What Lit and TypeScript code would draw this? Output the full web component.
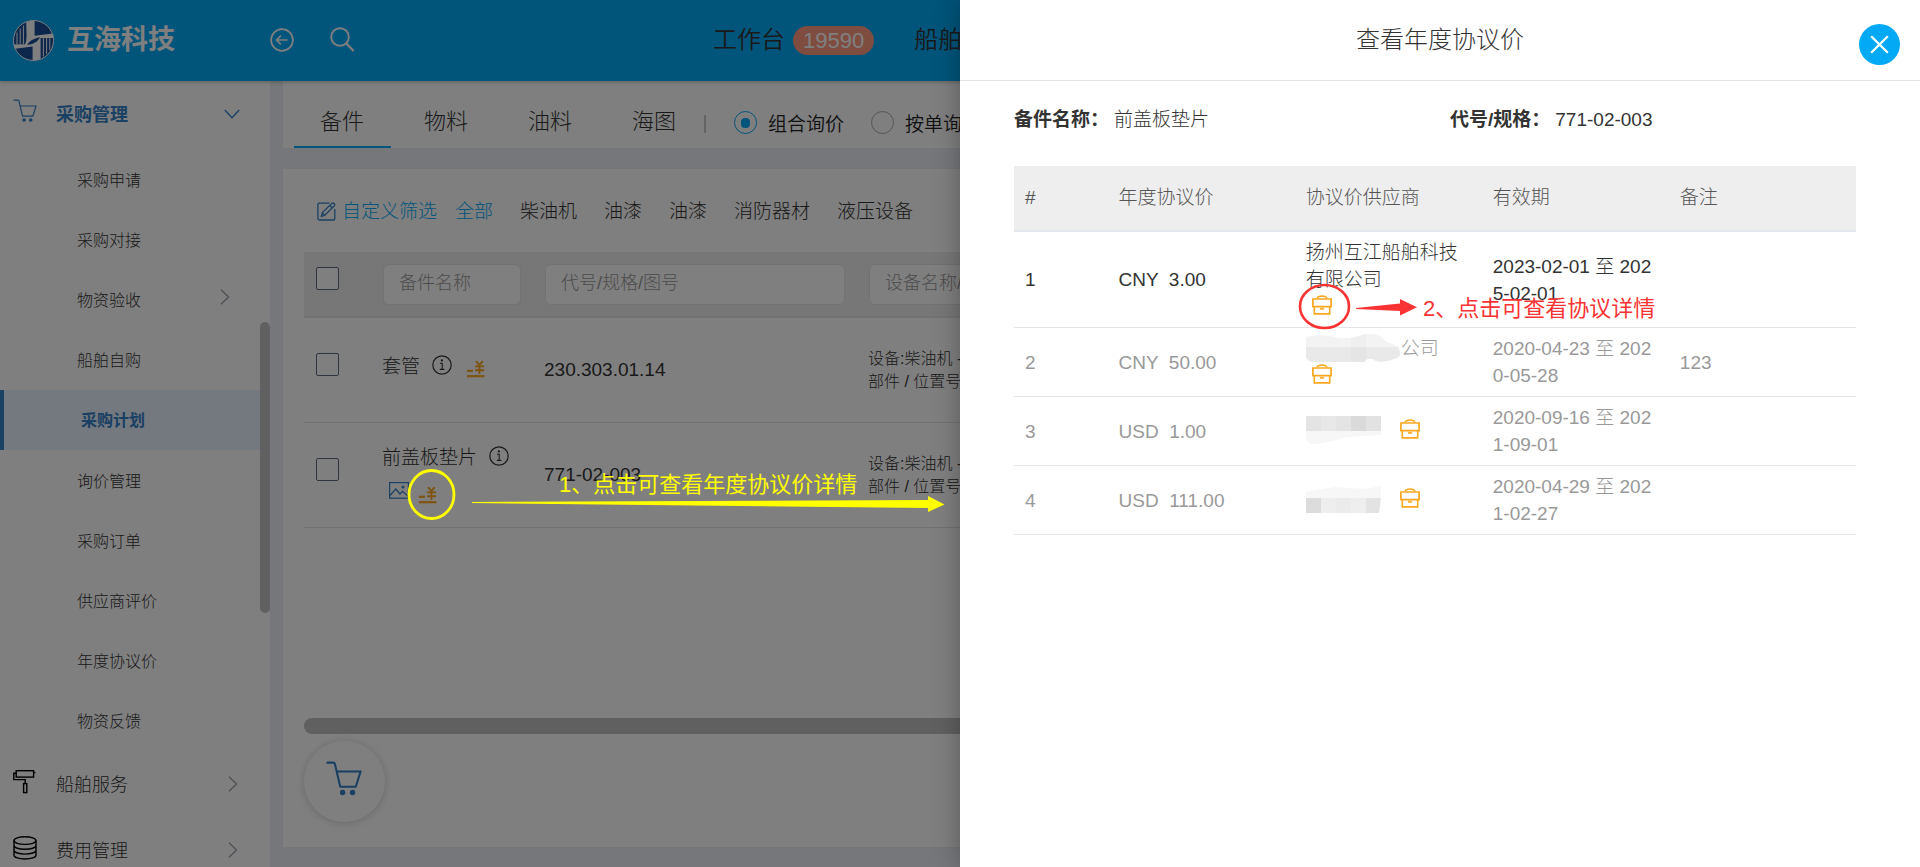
import { LitElement, html, svg, css, nothing } from "lit";
import { customElement, state } from "lit/decorators.js";
import { classMap } from "lit/directives/class-map.js";

const chevronRight = html`<svg class="chev" width="10" height="16" viewBox="0 0 10 16" aria-hidden="true">
  <path d="M1 .8 8.6 8 1 15.2" fill="none" stroke="currentColor" stroke-width="1.3" />
</svg>`;

const chevronDown = html`<svg class="chev" width="16" height="10" viewBox="0 0 16 10" aria-hidden="true">
  <path d="M.8 1 8 8.8 15.2 1" fill="none" stroke="currentColor" stroke-width="1.4" />
</svg>`;

const cartShapes = svg`
  <path d="M1 1.2h4.300q.9 0 1.100.8L10.300 18.600h11.200L25 7.600H7.800" fill="none" stroke="currentColor" stroke-width="var(--cart-stroke, 1.3)" stroke-linejoin="round" stroke-linecap="round" />
  <circle cx="12" cy="22.8" r="1.95" fill="currentColor" />
  <circle cx="19.2" cy="22.8" r="1.95" fill="currentColor" />`;

const menuIcons: Record<string, unknown> = {
  cart: html`<svg width="24" height="24" viewBox="0 0 26 26" aria-hidden="true">${cartShapes}</svg>`,
  roller: html`<svg width="24" height="26" viewBox="0 0 24 26" fill="none" stroke="currentColor" stroke-width="1.4" aria-hidden="true">
    <rect x="3.2" y="1.7" width="17.4" height="6.4" />
    <path d="M20.6 3.6h1.8M3.2 4.2H.8v6.4h11.4v4" />
    <rect x="10.6" y="14.6" width="3.2" height="9" />
  </svg>`,
  database: html`<svg width="24" height="24" viewBox="0 0 24 24" fill="none" stroke="currentColor" stroke-width="1.4" aria-hidden="true">
    <ellipse cx="12" cy="4.6" rx="11" ry="3.8" />
    <path d="M1 4.6v14.6c0 2.2 5 3.8 11 3.8s11-1.6 11-3.8V4.6M1 9.5c0 2.2 5 3.8 11 3.8s11-1.6 11-3.8M1 14.3c0 2.2 5 3.8 11 3.8s11-1.6 11-3.8" />
  </svg>`,
};

const yenIcon = html`<svg width="18" height="18" viewBox="0 0 18 18" fill="none" stroke="currentColor" aria-hidden="true">
  <path d="M0 10.8h6" stroke-width="2.2" />
  <path d="M9 1.2 12.4 5 15.8 1.2M12.4 5v9M8 6.4h9M8 10.2h9" stroke-width="1.9" />
  <path d="M0 16.2h17.4" stroke-width="2.2" />
</svg>`;

const infoIcon = html`<svg width="20" height="20" viewBox="0 0 20 20" fill="none" stroke="currentColor" aria-hidden="true">
  <circle cx="10" cy="10" r="9.2" stroke-width="1.2" />
  <path d="M8 8.2h2.2v6M7.8 14.4h4.6" stroke-width="1.1" />
  <circle cx="9.9" cy="5.4" r="1.1" fill="currentColor" stroke="none" />
</svg>`;

const pictureIcon = html`<svg width="20" height="17" viewBox="0 0 20 17" fill="none" stroke="currentColor" aria-hidden="true">
  <rect x=".6" y=".6" width="18.8" height="15.6" stroke-width="1.2" />
  <path d="M1 13.5 6.8 7l4.2 5 2.6-2.6 5.6 5" stroke-width="1.2" />
  <circle cx="14" cy="5" r="1.5" fill="currentColor" stroke="none" />
</svg>`;

const caseIcon = html`<svg width="20" height="20" viewBox="0 0 20 20" fill="none" stroke="currentColor" aria-hidden="true">
  <path d="M5 3.4C5.6 1.8 7.4 1 10 1s4.400.8 5 2.4" stroke-width="1.5" />
  <path d="M.9 4h18.200v7.600H.9z" stroke-width="1.7" />
  <path d="M2.300 11.600v7.300h15.400v-7.300" stroke-width="1.6" />
  <path d="M8.200 13.200h3.600v1.200H8.200z" fill="currentColor" stroke-width=".6" />
</svg>`;

const SUB_MENU = ["采购申请", "采购对接", "物资验收", "船舶自购", "采购计划", "询价管理", "采购订单", "供应商评价", "年度协议价", "物资反馈"];
const TABS = ["备件", "物料", "油料", "海图"];
const FILTERS = ["全部", "柴油机", "油漆", "油漆", "消防器材", "液压设备"];

@customElement("side-menu")
class SideMenu extends LitElement {
  @state() private active = "采购计划";

  static styles = css`
    :host { display: block; position: relative; overflow: hidden; background: #fff; font-weight: 300; color: #333; }
    a { color: inherit; text-decoration: none; display: flex; align-items: center; }
    .group span { padding-bottom: 2px; }
    .group { height: 66px; padding: 0 32px 0 13px; font-size: 18px; box-sizing: border-box; }
    .group svg:first-child { flex: none; margin: 0 19px 4px 0; color: #000; }
    .group .chev { margin-left: auto; color: #9a9fab; }
    .group.open { font-weight: 700; color: #3480c6; padding-right: 30px; }
    .group.open svg, .group.open svg:first-child { color: #3480c6; }
    .group.open svg:first-child { margin-bottom: 6px; }
    ul { list-style: none; margin: 0; padding: 2px 0 0; height: 604px; box-sizing: border-box; display: flex; flex-direction: column; justify-content: space-between; }
    .item { height: 60px; padding: 0 40px 1px 77px; font-size: 16px; box-sizing: border-box; }
    .item .chev { margin: 0 0 4px auto; color: #9a9fab; }
    .item.on { background: #e9f1ff; border-left: 4px solid #3480c6; color: #3480c6; font-weight: 700; }
    .bar { position: absolute; right: 0; top: 241px; width: 10px; height: 291px; border-radius: 5px; background: #c1c1c1; }
  `;

  render() {
    return html`
      <nav>
        <a class="group open" href="#purchase">${menuIcons.cart}<span>采购管理</span>${chevronDown}</a>
        <ul>
          ${SUB_MENU.map((name) => html`<li>
            <a class=${classMap({ item: true, on: name === this.active })} href="#sub" @click=${() => (this.active = name)}>
              <span>${name}</span>${name === "物资验收" ? chevronRight : nothing}
            </a>
          </li>`)}
        </ul>
        <a class="group" href="#service">${menuIcons.roller}<span>船舶服务</span>${chevronRight}</a>
        <a class="group" href="#cost">${menuIcons.database}<span>费用管理</span>${chevronRight}</a>
      </nav>
      <div class="bar"></div>
    `;
  }
}

@customElement("top-bar")
class TopBar extends LitElement {
  static styles = css`
    :host { display: flex; align-items: center; height: 81px; background: #03a9f4; position: relative; z-index: 1; box-shadow: 0 1px 4px rgba(0, 0, 0, 0.25); }
    .brand { display: flex; align-items: center; gap: 13px; width: 270px; padding-left: 13px; box-sizing: border-box; color: #fff; font-size: 27px; line-height: 36px; font-weight: 700; }
    .brand span { padding-bottom: 2px; }
    .tools { display: flex; align-items: center; gap: 36px; padding-bottom: 2px; }
    button { border: 0; padding: 0; background: none; color: #fff; display: block; }
    svg { display: block; }
    nav { display: flex; gap: 40px; margin-left: 358px; font-size: 24px; line-height: 36px; font-weight: 350; white-space: nowrap; }
    a { color: #333; text-decoration: none; display: flex; align-items: center; gap: 8px; padding-bottom: 2px; }
    .badge { height: 29px; line-height: 29px; padding: 0 10px; margin-top: 2px; border-radius: 15px; background: #ff9880; color: #fff; font-size: 22px; }
  `;

  render() {
    return html`
      <div class="brand">
        <svg width="41" height="41" viewBox="0 0 41 41" aria-hidden="true">
          <circle cx="20.5" cy="20.5" r="20" fill="#1b4c98" stroke="#fff" />
          <path d="M13.200 2.600Q17 .8 21.600.6V15.800L40 13.600Q41 16.500 40.500 18H27.600V38.800Q24 40.500 19.600 40.400V26.400L2 28.800Q.8 27 .6 24.600L12 24.200Q13.600 21 13.600 16z" fill="#fff" />
          <path d="M14 24.800c2.500-4 6.500-6.400 13-7.600-2 4.200-5.600 6.800-13 7.600z" fill="#1b4c98" />
          <path d="M4 12.500v12M7.200 8.500V24.500M10.400 5.500V24" stroke="#fff" stroke-width="1" />
          <path d="M30.400 18V36.500M33.600 18v16M36.800 18V30" stroke="#fff" stroke-width="1" />
        </svg>
        <span>互海科技</span>
      </div>
      <div class="tools">
        <button aria-label="返回">
          <svg width="24" height="24" viewBox="0 0 24 24" fill="none" stroke="currentColor" stroke-width="1.7">
            <circle cx="12" cy="12" r="10.9" />
            <path d="M17.500 12H7M11 7.500 6.500 12l4.500 4.500" />
          </svg>
        </button>
        <button aria-label="搜索">
          <svg width="25" height="26" viewBox="0 0 25 26" fill="none" stroke="currentColor" stroke-width="1.9">
            <circle cx="10" cy="10" r="8.8" />
            <path d="M16.200 16.200 23.600 24" stroke-width="2.2" />
          </svg>
        </button>
      </div>
      <nav>
        <a href="#desk"><span>工作台</span><span class="badge">19590</span></a>
        <a href="#ship">船舶</a>
      </nav>
    `;
  }
}

@customElement("parts-page")
class PartsPage extends LitElement {
  @state() private tab = "备件";

  static styles = css`
    :host { display: flex; flex-direction: column; gap: 21px; padding: 0 13px 20px; min-width: 0; box-sizing: border-box; background: #ebeff4; font-weight: 300; color: #333; }
    svg { display: block; }
    .tabs { display: flex; height: 67px; padding-left: 11px; background: #fff; align-items: stretch; }
    .tab { border: 0; border-bottom: 2px solid transparent; border-top: 2px solid transparent; margin-right: 7px; padding: 9px 27px 0 26px; background: none; font: inherit; font-size: 22px; color: inherit; }
    .tab.on { border-bottom-color: #03a9f4; }
    .split { width: 2px; height: 18px; margin: 34px 28px 0 -6px; background: #c8c8c8; }
    .mode { display: flex; align-items: center; gap: 11px; margin-right: 27px; padding-top: 16px; font-size: 19px; font-weight: 350; color: #222; white-space: nowrap; }
    .mode input { appearance: none; width: 23px; height: 23px; margin: 0; border: 1px solid #aaa; border-radius: 50%; display: grid; place-items: center; }
    .mode input:checked { border-color: #03a9f4; }
    .mode input:checked::before { content: ""; width: 9px; height: 10px; border-radius: 4px; background: #03a9f4; }
    .panel { flex: 1; display: flex; flex-direction: column; padding: 0 0 25px 21px; background: #fff; overflow: hidden; }
    .filters { display: flex; align-items: center; gap: 27px; height: 83px; padding: 0 0 2px 13px; box-sizing: border-box; font-size: 19px; }
    .filters a { color: inherit; text-decoration: none; }
    .filters .edit { display: flex; align-items: center; gap: 6px; margin-right: -9px; color: #03a9f4; }
    .filters .edit svg { color: #3480c6; margin-top: 4px; }
    .filters .all { color: #03a9f4; }
    .scroll { flex: 1; overflow: hidden; }
    table { width: 100%; border-collapse: separate; border-spacing: 0; table-layout: fixed; font-size: 19px; }
    th, td { text-align: left; font-weight: inherit; padding: 0 11px; box-sizing: border-box; }
    th { height: 66px; padding: 0 12px; background: #eee; border-bottom: 2px solid #e3e6ea; }
    td { height: 105px; border-bottom: 1px solid #e5e5e5; }
    .c-check { width: 67px; }
    .c-name { width: 162px; }
    .c-code { width: 324px; }
    td.c-check, th.c-check { padding: 0 12px; }
    .c-check input { appearance: none; display: block; width: 23px; height: 23px; margin: 0 0 11px; border: 1px solid #5c6b80; border-radius: 2px; background: #fff; }
    th input.text { width: 100%; height: 41px; padding: 0 15px 1px; box-sizing: border-box; border: 1px solid #e5e5e5; border-radius: 6px; background: #fff; font: inherit; font-size: 18px; color: #333; display: block; }
    th input.text::placeholder { color: #999; opacity: 1; }
    .name { display: flex; flex-wrap: wrap; align-items: flex-start; line-height: 27px; }
    .icon { border: 0; padding: 0; background: none; color: #333; }
    .info { margin: 2px 0 0 12px; }
    .yen { color: #faa71f; }
    .name > .yen { margin: 7px 0 10px 15px; }
    .attach { display: flex; align-items: flex-start; gap: 10px; width: 100%; padding: 11px 0 2px 7px; }
    .attach .yen { margin-top: 4px; }
    .pic { color: #3480c6; }
    .equip { font-size: 16px; line-height: 23px; white-space: nowrap; }
    .code { font-weight: 400; }
    .bar { height: 16px; border-radius: 8px; background: #c1c1c1; }
    .basket { width: 81px; height: 81px; margin-top: 7px; padding: 0 0 6px 22px; border: 0; border-radius: 50%; background: #fff; color: #3280c4; box-shadow: 0 1px 8px rgba(0, 0, 0, 0.18); --cart-stroke: 1.5; }
  `;

  private infoButton() {
    return html`<button class="icon info" aria-label="详情">${infoIcon}</button>`;
  }

  private yenButton() {
    return html`<button class="icon yen" aria-label="年度协议价">${yenIcon}</button>`;
  }

  private row(name: string, code: string, picture: boolean) {
    return html`<tr>
      <td class="c-check"><input type="checkbox" aria-label=${name} /></td>
      <td>
        <div class="name">
          <span>${name}</span>${this.infoButton()}
          ${picture
            ? html`<div class="attach"><button class="icon pic" aria-label="图片">${pictureIcon}</button>${this.yenButton()}</div>`
            : this.yenButton()}
        </div>
      </td>
      <td class="code">${code}</td>
      <td class="equip">设备:柴油机 -<br />部件 / 位置号</td>
    </tr>`;
  }

  render() {
    return html`
      <div class="tabs">
        ${TABS.map((t) => html`<button class=${classMap({ tab: true, on: t === this.tab })} @click=${() => (this.tab = t)}>${t}</button>`)}
        <span class="split"></span>
        <label class="mode"><input type="radio" name="mode" checked /><span>组合询价</span></label>
        <label class="mode"><input type="radio" name="mode" /><span>按单询价</span></label>
      </div>
      <section class="panel">
        <div class="filters">
          <a class="edit" href="#custom">
            <svg width="19" height="19" viewBox="0 0 19 19" fill="none" stroke="currentColor" stroke-width="1.3" aria-hidden="true">
              <path d="M12.500 1.200H2.200A1.300 1.300 0 0 0 .9 2.500v14.300A1.300 1.300 0 0 0 2.200 18h14.300a1.300 1.300 0 0 0 1.300-1.300V7" />
              <path d="M5.200 10.800 14.600 1.600a1.700 1.700 0 0 1 2.500 2.400L7.600 13.400 4.400 14.400zM12.800 3.500l2.400 2.300M5.200 10.800l2.400 2.600" />
            </svg>
            <span>自定义筛选</span>
          </a>
          ${FILTERS.map((f, i) => html`<a class=${i === 0 ? "all" : "kind"} href="#filter">${f}</a>`)}
        </div>
        <div class="scroll">
          <table>
            <thead>
              <tr>
                <th class="c-check"><input type="checkbox" aria-label="全选" /></th>
                <th class="c-name"><input class="text" placeholder="备件名称" aria-label="备件名称" /></th>
                <th class="c-code"><input class="text" placeholder="代号/规格/图号" aria-label="代号/规格/图号" /></th>
                <th><input class="text" placeholder="设备名称/" aria-label="设备名称" /></th>
              </tr>
            </thead>
            <tbody>
              ${this.row("套管", "230.303.01.14", false)}
              ${this.row("前盖板垫片", "771-02-003", true)}
            </tbody>
          </table>
        </div>
        <div class="bar"></div>
        <button class="basket" aria-label="购物车">
          <svg width="36" height="36" viewBox="0 0 26 26" aria-hidden="true">${cartShapes}</svg>
        </button>
      </section>
    `;
  }
}

const maskLong = html`<svg class="mask" width="95" height="30" viewBox="0 0 95 30" aria-hidden="true">
  <path d="M0 4Q14 0 28 4 40 7 52 3 66-2 76 4q4 6 8 6l11 5H0z" fill="#f3f3f3" />
  <path d="M45 14V5q10-2 15-4v13z" fill="#efefef" />
  <path d="M0 14h92q6 10-4 12-10 4-18 2-8-5-12 1H6q-6-2-6-6z" fill="#e9e9e9" />
  <path d="M45 14h15v13l-2 2H45z" fill="#e5e5e5" />
</svg>`;

const maskThird = html`<svg class="mask" width="75" height="29" viewBox="0 0 75 29" aria-hidden="true">
  <path d="M0 15h75v4l-34 2-14 4-15 3H4q-4-4-4-8z" fill="#f7f7f7" />
  <path d="M0 0h15v15H0z" fill="#e4e4e4" /><path d="M15 0h15v15H15z" fill="#e8e8e8" />
  <path d="M30 0h15v15H30z" fill="#e4e4e4" /><path d="M45 0h15v15H45z" fill="#dadada" />
  <path d="M60 0h15v15H60z" fill="#e2e2e2" />
</svg>`;

const maskFourth = html`<svg class="mask" width="75" height="27" viewBox="0 0 75 27" aria-hidden="true">
  <path d="M0 12V6l14-3 16-2 28 2L75 0v12z" fill="#f7f7f7" />
  <path d="M0 12h15v15H0z" fill="#dcdcdc" /><path d="M15 12h45v15H15z" fill="#eee" />
  <path d="M30 12h15v15H30z" fill="#ebebeb" /><path d="M60 12h15l-2 15H60z" fill="#e3e3e3" />
</svg>`;

interface Price {
  price: string;
  supplier: unknown;
  wrap: boolean;
  range: string;
  note: string;
}

const PRICES: Price[] = [
  { price: "CNY  3.00", supplier: "扬州互江船舶科技有限公司", wrap: true, range: "2023-02-01 至 2025-02-01", note: "" },
  { price: "CNY  50.00", supplier: html`${maskLong}公司`, wrap: true, range: "2020-04-23 至 2020-05-28", note: "123" },
  { price: "USD  1.00", supplier: maskThird, wrap: false, range: "2020-09-16 至 2021-09-01", note: "" },
  { price: "USD  111.00", supplier: maskFourth, wrap: false, range: "2020-04-29 至 2021-02-27", note: "" },
];

@customElement("price-drawer")
class PriceDrawer extends LitElement {
  static styles = css`
    :host { display: block; background: #fff; color: #333; box-shadow: 0 0 24px rgba(0, 0, 0, 0.3); font-size: 19px; line-height: 27px; font-weight: 300; }
    header { display: grid; place-items: center; height: 80px; border-bottom: 1px solid #e5e5e5; }
    h1 { margin: 0; font-size: 24px; line-height: 36px; font-weight: 300; }
    .close { position: absolute; top: 24px; right: 20px; width: 41px; height: 41px; padding: 0; border: 0; border-radius: 50%; background: #03a9f4; display: grid; place-items: center; }
    .body { padding: 25px 64px 0 54px; }
    dl { display: grid; grid-template-columns: 1fr 1fr; column-gap: 30px; margin: 0 0 33px; }
    dl div { display: flex; gap: 5px; }
    dt { font-weight: 700; }
    dd { margin: 0; }
    .num { font-weight: 400; }
    table { width: 100%; border-collapse: separate; border-spacing: 0; table-layout: fixed; }
    th, td { text-align: left; font-weight: 300; padding: 7px 11px; box-sizing: border-box; }
    th { height: 66px; background: #eee; border-bottom: 2px solid #e3e6ea; color: #555; padding-bottom: 9px; }
    th:first-child { width: 11.11%; }
    td { border-bottom: 1px solid #e5e5e5; word-break: break-all; white-space: pre-wrap; }
    .old td { color: #999; }
    .sup { display: flex; flex-wrap: wrap; align-items: center; }
    .sup.stack { display: block; }
    .sup > span { display: block; }
    .mask { display: inline-block; vertical-align: middle; margin: -6px 0 -2px; }
    .case { border: 0; padding: 0; height: 27px; margin-left: 19px; background: none; color: #faa71f; display: block; }
    .case svg { display: block; margin-bottom: 4px; }
    .stack .case { margin-left: 6px; }
  `;

  render() {
    return html`
      <header><h1>查看年度协议价</h1></header>
      <button class="close" aria-label="关闭">
        <svg width="19" height="19" viewBox="0 0 19 19" aria-hidden="true">
          <path d="M1.200 1.200 17.800 17.800M17.800 1.200 1.200 17.800" stroke="#fff" stroke-width="2.3" />
        </svg>
      </button>
      <div class="body">
        <dl>
          <div><dt>备件名称：</dt><dd>前盖板垫片</dd></div>
          <div><dt>代号/规格：</dt><dd class="num">771-02-003</dd></div>
        </dl>
        <table>
          <thead>
            <tr><th>#</th><th>年度协议价</th><th>协议价供应商</th><th>有效期</th><th>备注</th></tr>
          </thead>
          <tbody>
            ${PRICES.map((p, i) => html`<tr class=${i ? "old" : "current"}>
              <td>${i + 1}</td><td>${p.price}</td><td><div class=${p.wrap ? "sup stack" : "sup"}><span>${p.supplier}</span><button class="case" aria-label="协议详情">${caseIcon}</button></div></td><td>${p.range}</td><td>${p.note}</td>
            </tr>`)}
          </tbody>
        </table>
      </div>
    `;
  }
}

@customElement("app-root")
class AppRoot extends LitElement {
  static styles = css`
    :host { display: grid; grid-template-rows: auto 1fr; height: 100vh; position: relative; overflow: hidden; font-family: "Liberation Sans", "Noto Sans CJK SC", sans-serif; }
    .main { display: grid; grid-template-columns: 270px 1fr; min-height: 0; }
    .shade { position: absolute; inset: 0; z-index: 2; background: rgba(0, 0, 0, 0.5); }
    price-drawer { position: absolute; z-index: 3; top: 0; right: 0; bottom: 0; width: 50%; }
    .notes { position: absolute; z-index: 4; inset: 0; pointer-events: none; font-size: 22px; line-height: 30px; white-space: nowrap; }
    .notes svg { position: absolute; left: 0; top: 0; }
    .note { position: absolute; }
    .first { left: 559px; top: 470px; color: #ff0; }
    .second { left: 1423px; top: 294px; color: #f93333; }
  `;

  render() {
    return html`
      <top-bar></top-bar>
      <div class="main">
        <side-menu></side-menu>
        <parts-page></parts-page>
      </div>
      <div class="shade"></div>
      <price-drawer></price-drawer>
      <div class="notes">
        <svg width="1920" height="867" viewBox="0 0 1920 867" aria-hidden="true">
          <ellipse cx="431.5" cy="494.5" rx="22.5" ry="24" fill="none" stroke="#ff0" stroke-width="2.8" />
          <path d="M472 502 928 500v-4l16.500 8.500L928 512v-4L472 503z" fill="#ff0" />
          <ellipse cx="1324.5" cy="306.5" rx="24.5" ry="21.5" fill="none" stroke="#f93333" stroke-width="2.6" />
          <path d="M1356 308 1400 303.500V299l17 8.200-17 8.300v-4.500L1356 309z" fill="#f93333" />
        </svg>
        <span class="note first">1、点击可查看年度协议价详情</span>
        <span class="note second">2、点击可查看协议详情</span>
      </div>
    `;
  }
}
